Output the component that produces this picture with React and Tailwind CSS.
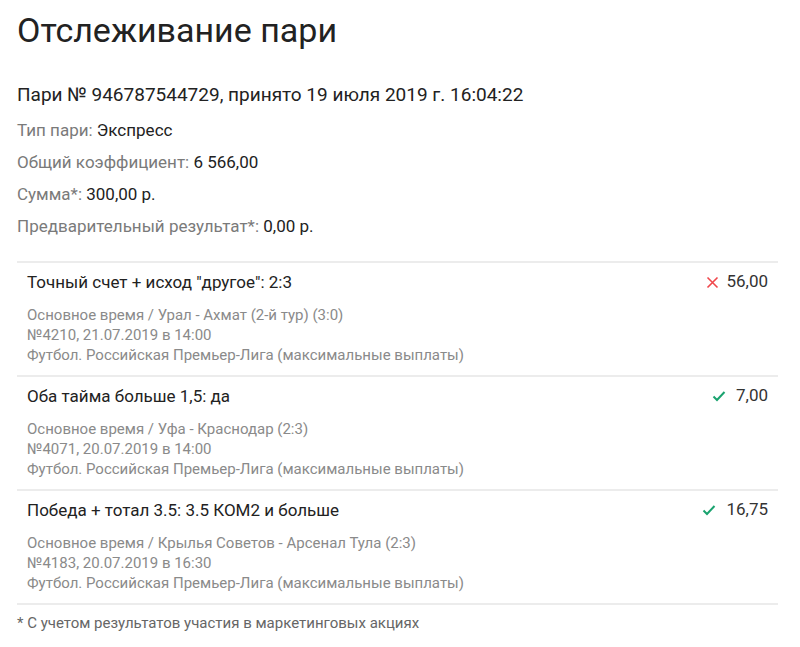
import React from "react";

const bets = [
  {
    title: 'Точный счет + исход "другое": 2:3',
    lines: [
      "Основное время / Урал - Ахмат (2-й тур) (3:0)",
      "№4210, 21.07.2019 в 14:00",
      "Футбол. Российская Премьер-Лига (максимальные выплаты)",
    ],
    odds: "56,00",
    won: false,
  },
  {
    title: "Оба тайма больше 1,5: да",
    lines: [
      "Основное время / Уфа - Краснодар (2:3)",
      "№4071, 20.07.2019 в 14:00",
      "Футбол. Российская Премьер-Лига (максимальные выплаты)",
    ],
    odds: "7,00",
    won: true,
  },
  {
    title: "Победа + тотал 3.5: 3.5 КОМ2 и больше",
    lines: [
      "Основное время / Крылья Советов - Арсенал Тула (2:3)",
      "№4183, 20.07.2019 в 16:30",
      "Футбол. Российская Премьер-Лига (максимальные выплаты)",
    ],
    odds: "16,75",
    won: true,
  },
];

const info = [
  ["Тип пари:", "Экспресс"],
  ["Общий коэффициент:", "6 566,00"],
  ["Сумма*:", "300,00 р."],
  ["Предварительный результат*:", "0,00 р."],
];

const Cross = () => (
  <svg width="13" height="13" viewBox="0 0 13 13" className="mr-[7px]">
    <path d="M1.5 1.5l10 10M11.5 1.5l-10 10" stroke="#f0474b" strokeWidth="1.6" fill="none" />
  </svg>
);

const Check = () => (
  <svg width="14" height="12" viewBox="0 0 14 12" className="mr-[10px]">
    <path d="M1.5 6.5l3.5 3.5 7.5-8" stroke="#1aa36f" strokeWidth="2" fill="none" />
  </svg>
);

export default function App() {
  return (
    <div className="bg-white min-h-[647px] pl-[17px] pr-[22px] pt-[8px] font-['Roboto',sans-serif] text-[#222]">
      <h1 className="text-[34px] leading-[44px] font-normal">Отслеживание пари</h1>

      <div className="mt-[31px] text-[19px] leading-[24px]">
        Пари № 946787544729, принято 19 июля 2019 г. 16:04:22
      </div>

      <div className="mt-[13px] flex flex-col gap-[12px] text-[17px] leading-[20px]">
        {info.map(([label, value]) => (
          <div key={label}>
            <span className="text-[#7a7a7a]">{label}</span> <span className="text-[#222]">{value}</span>
          </div>
        ))}
      </div>

      {/* Список событий */}
      <div className="mt-[25px] border-t-2 border-[#ececec]">
        {bets.map((bet) => (
          <div key={bet.title} className="flex justify-between border-b-2 border-[#ececec] px-[10px] pt-[8px] pb-[10px]">
            <div>
              <div className="text-[17px] leading-[22px]">{bet.title}</div>
              <div className="mt-[12px] text-[15px] leading-[20px] text-[#8a8a8a]">
                {bet.lines.map((l) => (
                  <div key={l}>{l}</div>
                ))}
              </div>
            </div>
            <div className="flex items-start">
              <div className="flex items-center h-[22px] text-[17px] text-[#333]">
                {bet.won ? <Check /> : <Cross />}
                {bet.odds}
              </div>
            </div>
          </div>
        ))}
      </div>

      <div className="mt-[8px] text-[15px] leading-[20px] text-[#666]">
        * С учетом результатов участия в маркетинговых акциях
      </div>
    </div>
  );
}
